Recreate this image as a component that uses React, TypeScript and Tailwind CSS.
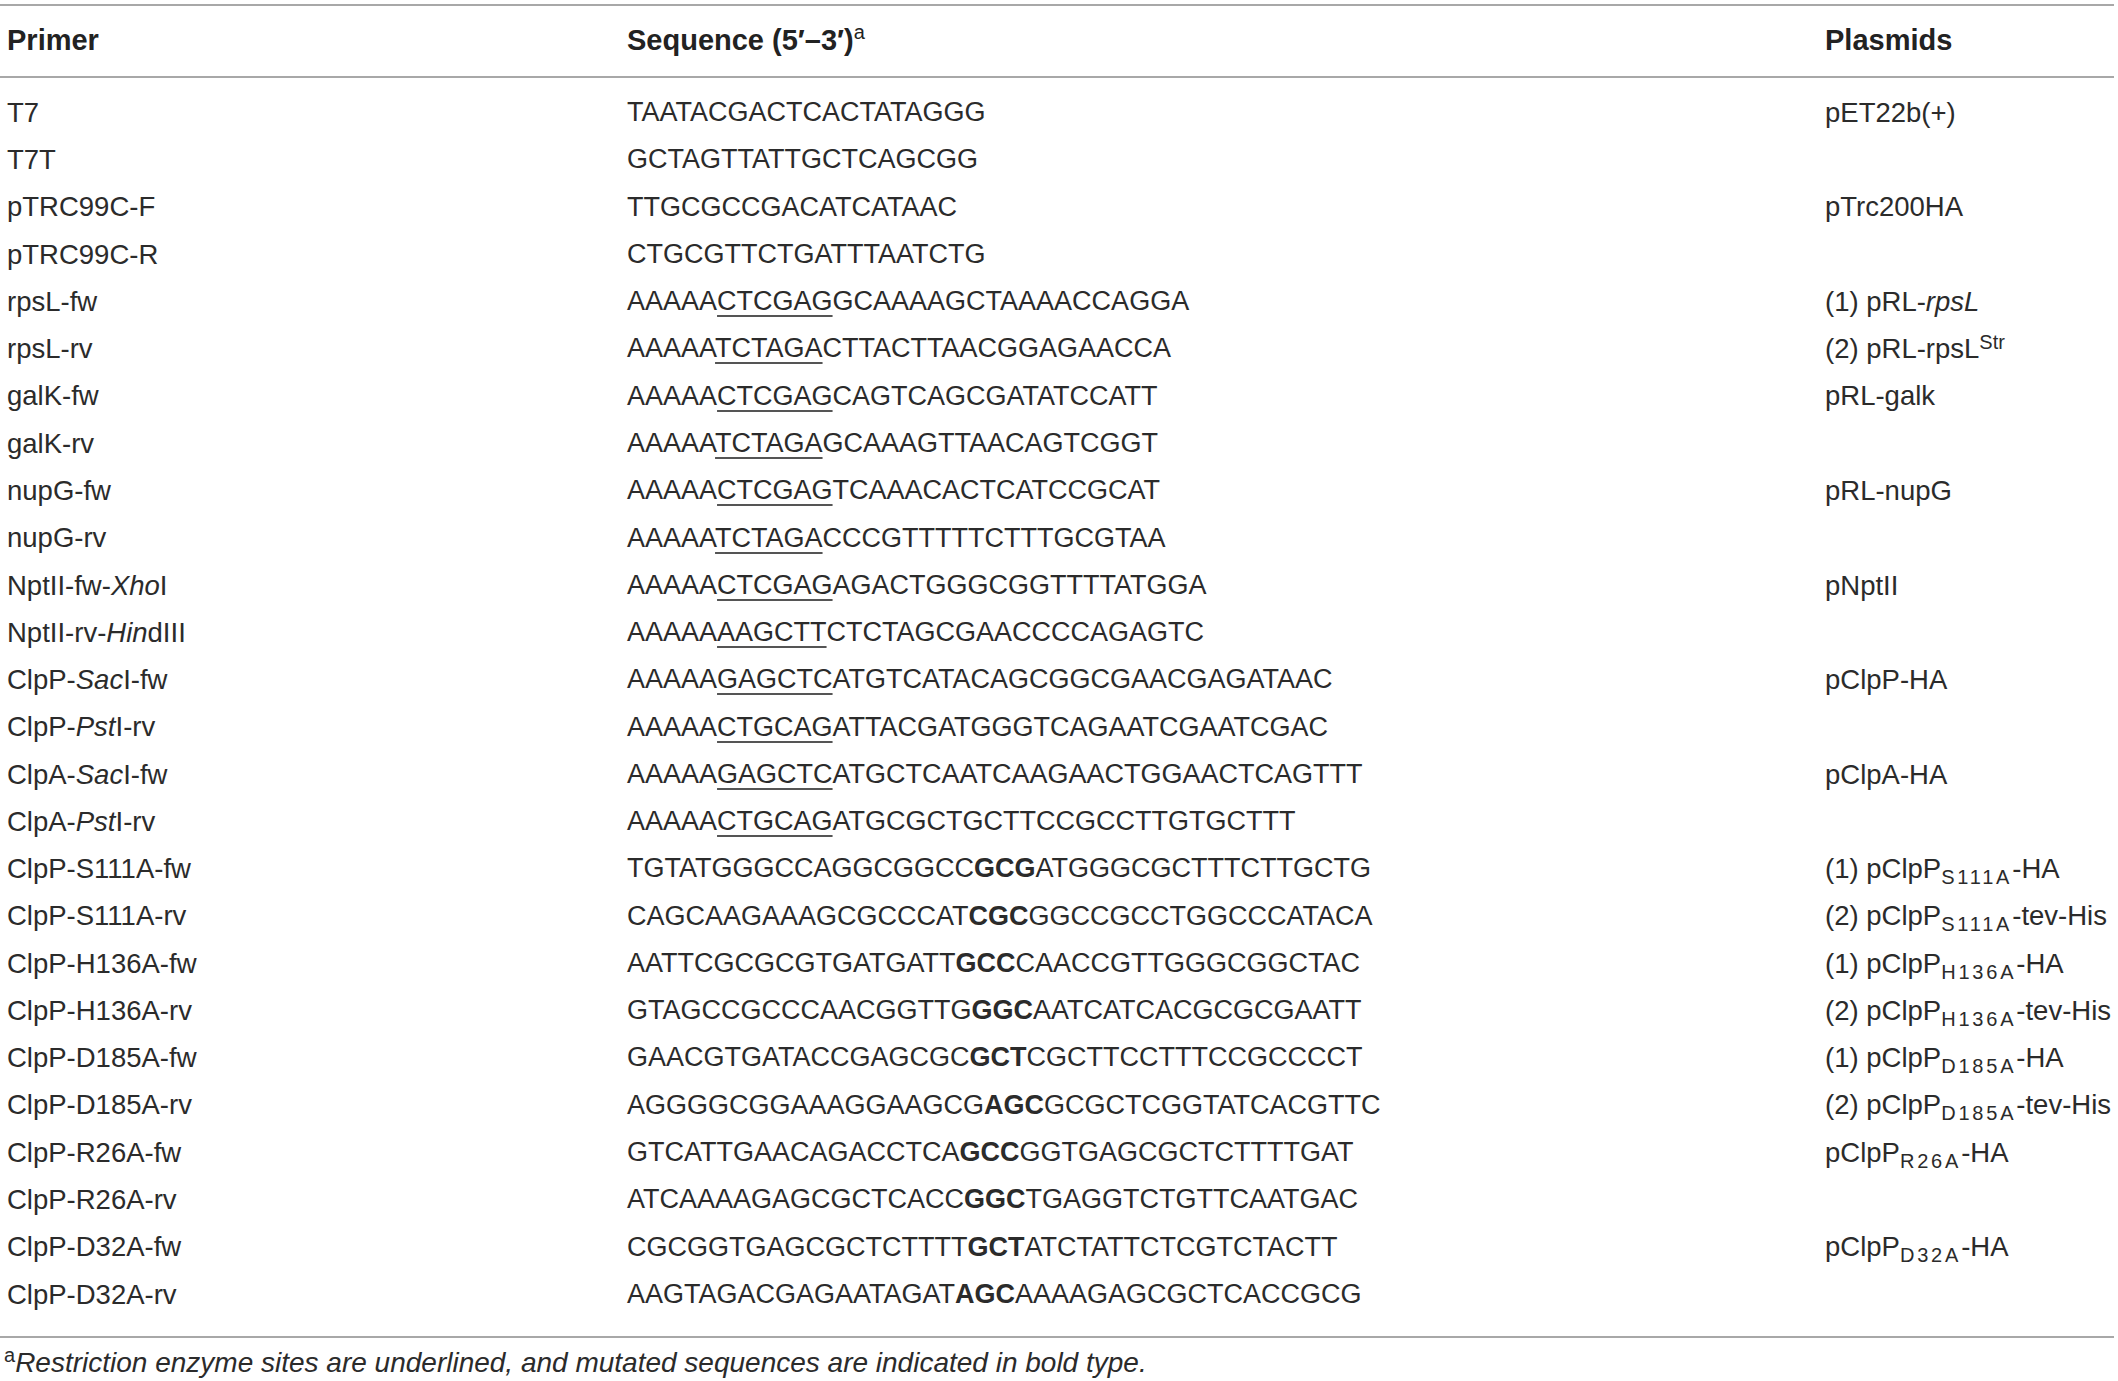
import type { ReactNode } from 'react';

type Row = { primer: ReactNode; seq: ReactNode; plasmid?: ReactNode };

const U = ({ children }: { children: ReactNode }) => (
    <span className="underline decoration-2 underline-offset-[5px] decoration-[#555]">{children}</span>
);

const B = ({ children }: { children: ReactNode }) => <span className="font-bold">{children}</span>;

const I = ({ children }: { children: ReactNode }) => <span className="italic">{children}</span>;

const Sub = ({ children }: { children: ReactNode }) => (
    <sub className="text-[20px] tracking-[0.14em] align-baseline bottom-[-6px] leading-none">{children}</sub>
);

const cut = (pre: string, site: string, post: string) => (
    <>
        {pre}
        <U>{site}</U>
        {post}
    </>
);

const mut = (pre: string, codon: string, post: string) => (
    <>
        {pre}
        <B>{codon}</B>
        {post}
    </>
);

const clpp = (n: string, tail: string, num?: string) => (
    <>
        {num ? `(${num}) ` : ''}pClpP<Sub>{n}</Sub>
        {tail}
    </>
);

const rows: Row[] = [
    { primer: 'T7', seq: 'TAATACGACTCACTATAGGG', plasmid: 'pET22b(+)' },
    { primer: 'T7T', seq: 'GCTAGTTATTGCTCAGCGG' },
    { primer: 'pTRC99C-F', seq: 'TTGCGCCGACATCATAAC', plasmid: 'pTrc200HA' },
    { primer: 'pTRC99C-R', seq: 'CTGCGTTCTGATTTAATCTG' },
    {
        primer: 'rpsL-fw',
        seq: cut('AAAAA', 'CTCGAG', 'GCAAAAGCTAAAACCAGGA'),
        plasmid: (
            <>
                (1) pRL-<I>rpsL</I>
            </>
        ),
    },
    {
        primer: 'rpsL-rv',
        seq: cut('AAAAA', 'TCTAGA', 'CTTACTTAACGGAGAACCA'),
        plasmid: (
            <>
                (2) pRL-rpsL<sup className="text-[20px] align-baseline top-[-9px] leading-none">Str</sup>
            </>
        ),
    },
    { primer: 'galK-fw', seq: cut('AAAAA', 'CTCGAG', 'CAGTCAGCGATATCCATT'), plasmid: 'pRL-galk' },
    { primer: 'galK-rv', seq: cut('AAAAA', 'TCTAGA', 'GCAAAGTTAACAGTCGGT') },
    { primer: 'nupG-fw', seq: cut('AAAAA', 'CTCGAG', 'TCAAACACTCATCCGCAT'), plasmid: 'pRL-nupG' },
    { primer: 'nupG-rv', seq: cut('AAAAA', 'TCTAGA', 'CCCGTTTTTCTTTGCGTAA') },
    {
        primer: (
            <>
                NptII-fw-<I>Xho</I>I
            </>
        ),
        seq: cut('AAAAA', 'CTCGAG', 'AGACTGGGCGGTTTTATGGA'),
        plasmid: 'pNptII',
    },
    {
        primer: (
            <>
                NptII-rv-<I>Hin</I>dIII
            </>
        ),
        seq: cut('AAAAA', 'AAGCTT', 'CTCTAGCGAACCCCAGAGTC'),
    },
    {
        primer: (
            <>
                ClpP-<I>Sac</I>I-fw
            </>
        ),
        seq: cut('AAAAA', 'GAGCTC', 'ATGTCATACAGCGGCGAACGAGATAAC'),
        plasmid: 'pClpP-HA',
    },
    {
        primer: (
            <>
                ClpP-<I>Pst</I>I-rv
            </>
        ),
        seq: cut('AAAAA', 'CTGCAG', 'ATTACGATGGGTCAGAATCGAATCGAC'),
    },
    {
        primer: (
            <>
                ClpA-<I>Sac</I>I-fw
            </>
        ),
        seq: cut('AAAAA', 'GAGCTC', 'ATGCTCAATCAAGAACTGGAACTCAGTTT'),
        plasmid: 'pClpA-HA',
    },
    {
        primer: (
            <>
                ClpA-<I>Pst</I>I-rv
            </>
        ),
        seq: cut('AAAAA', 'CTGCAG', 'ATGCGCTGCTTCCGCCTTGTGCTTT'),
    },
    { primer: 'ClpP-S111A-fw', seq: mut('TGTATGGGCCAGGCGGCC', 'GCG', 'ATGGGCGCTTTCTTGCTG'), plasmid: clpp('S111A', '-HA', '1') },
    { primer: 'ClpP-S111A-rv', seq: mut('CAGCAAGAAAGCGCCCAT', 'CGC', 'GGCCGCCTGGCCCATACA'), plasmid: clpp('S111A', '-tev-His', '2') },
    { primer: 'ClpP-H136A-fw', seq: mut('AATTCGCGCGTGATGATT', 'GCC', 'CAACCGTTGGGCGGCTAC'), plasmid: clpp('H136A', '-HA', '1') },
    { primer: 'ClpP-H136A-rv', seq: mut('GTAGCCGCCCAACGGTTG', 'GGC', 'AATCATCACGCGCGAATT'), plasmid: clpp('H136A', '-tev-His', '2') },
    { primer: 'ClpP-D185A-fw', seq: mut('GAACGTGATACCGAGCGC', 'GCT', 'CGCTTCCTTTCCGCCCCT'), plasmid: clpp('D185A', '-HA', '1') },
    { primer: 'ClpP-D185A-rv', seq: mut('AGGGGCGGAAAGGAAGCG', 'AGC', 'GCGCTCGGTATCACGTTC'), plasmid: clpp('D185A', '-tev-His', '2') },
    { primer: 'ClpP-R26A-fw', seq: mut('GTCATTGAACAGACCTCA', 'GCC', 'GGTGAGCGCTCTTTTGAT'), plasmid: clpp('R26A', '-HA') },
    { primer: 'ClpP-R26A-rv', seq: mut('ATCAAAAGAGCGCTCACC', 'GGC', 'TGAGGTCTGTTCAATGAC') },
    { primer: 'ClpP-D32A-fw', seq: mut('CGCGGTGAGCGCTCTTTT', 'GCT', 'ATCTATTCTCGTCTACTT'), plasmid: clpp('D32A', '-HA') },
    { primer: 'ClpP-D32A-rv', seq: mut('AAGTAGACGAGAATAGAT', 'AGC', 'AAAAGAGCGCTCACCGCG') },
];

export default function App() {
    return (
        <div className="w-[2118px] min-h-[1381px] bg-white text-[#2b2b2b] font-['Liberation_Sans',Arial,sans-serif] pt-[4px]">
            <div className="w-[2114px] border-t-2 border-[#a8a8a8]" />
            <div className="grid grid-cols-[620px_1198px_1fr] pl-[7px] h-[70px] items-center text-[29px] font-bold text-[#222]">
                <div>Primer</div>
                <div>
                    Sequence (5′–3′)<sup className="text-[20px] font-normal align-baseline top-[-11px] leading-none">a</sup>
                </div>
                <div>Plasmids</div>
            </div>
            <div className="w-[2114px] border-t-2 border-[#a8a8a8]" />
            <div className="flex flex-col pt-[11px] pb-[18px]">
                {rows.map((r, i) => (
                    <div
                        key={i}
                        className="grid grid-cols-[620px_1198px_1fr] pl-[7px] h-[47.28px] items-center whitespace-nowrap leading-none"
                    >
                        <div className="text-[27.5px]">{r.primer}</div>
                        <div className="text-[27px]">{r.seq}</div>
                        <div className="text-[27.5px]">{r.plasmid}</div>
                    </div>
                ))}
            </div>
            <div className="w-[2114px] border-t-2 border-[#a8a8a8]" />
            <div className="pl-[4px] pt-[11px] text-[28px] leading-none whitespace-nowrap">
                <sup className="text-[20px] align-baseline top-[-10px]">a</sup>
                <span className="italic">
                    Restriction enzyme sites are underlined, and mutated sequences are indicated in bold type.
                </span>
            </div>
        </div>
    );
}
